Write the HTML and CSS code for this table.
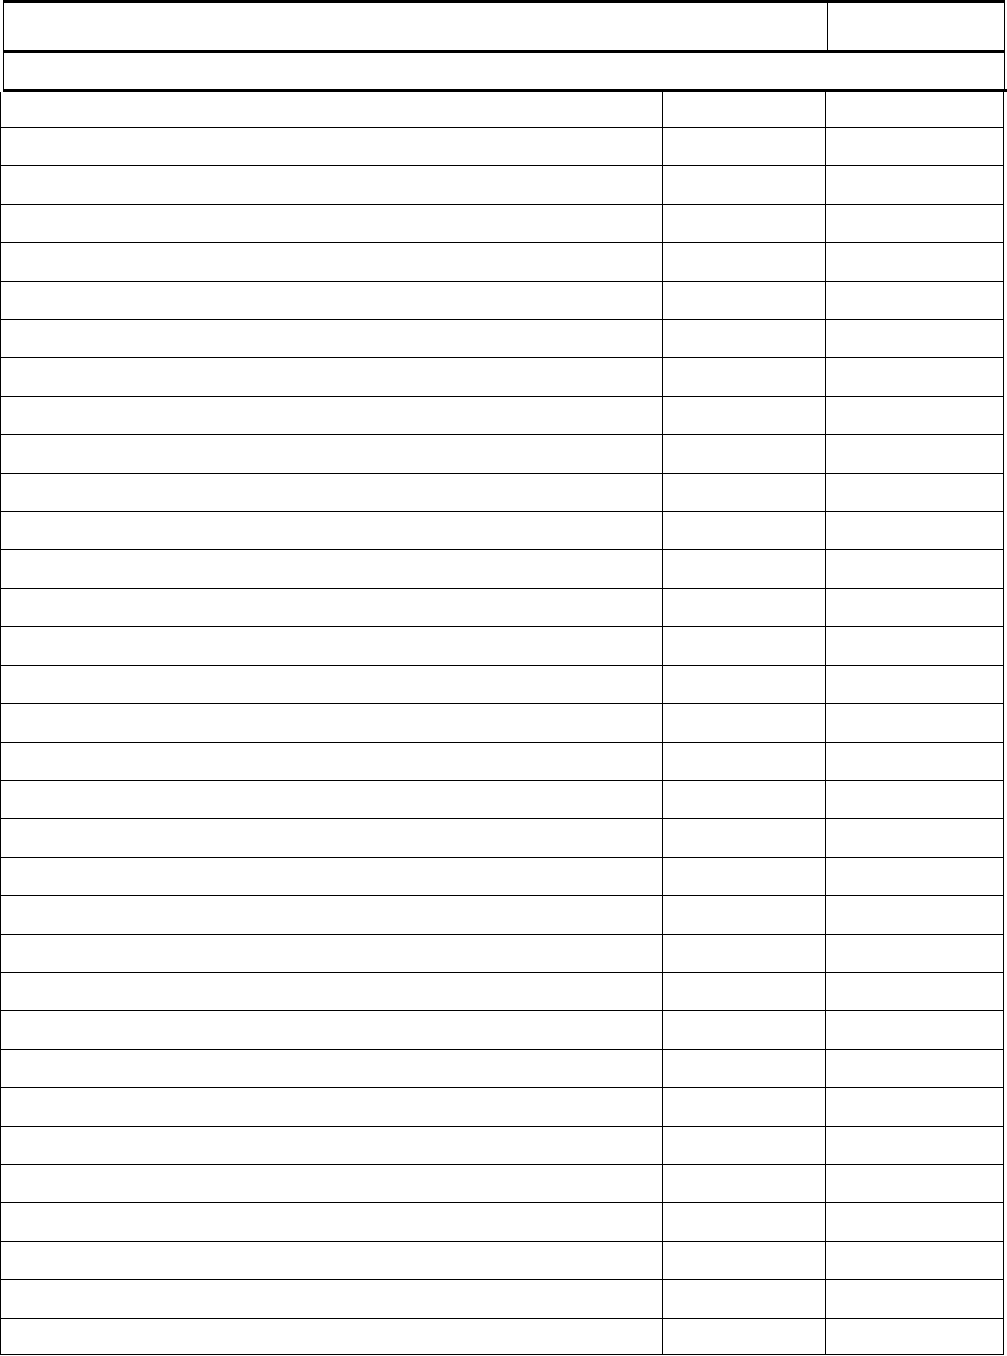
FILE: index.html
```html
<!DOCTYPE html>
<html>
<head>
<meta charset="utf-8">
<title>Table</title>
<link rel="stylesheet" href="styles.css">
</head>
<body>
<div class="sheet">
  <div class="head">
    <div class="head-row">
      <div class="head-cell head-main"></div>
      <div class="head-cell head-side"></div>
    </div>
    <div class="head-sub"></div>
  </div>
  <div class="rule"></div>
  <div class="grid" id="grid">
    <div class="row first"><div class="c c1"></div><div class="c c2"></div><div class="c c3"></div></div>
    <div class="row"><div class="c c1"></div><div class="c c2"></div><div class="c c3"></div></div>
    <div class="row"><div class="c c1"></div><div class="c c2"></div><div class="c c3"></div></div>
    <div class="row"><div class="c c1"></div><div class="c c2"></div><div class="c c3"></div></div>
    <div class="row"><div class="c c1"></div><div class="c c2"></div><div class="c c3"></div></div>
    <div class="row"><div class="c c1"></div><div class="c c2"></div><div class="c c3"></div></div>
    <div class="row"><div class="c c1"></div><div class="c c2"></div><div class="c c3"></div></div>
    <div class="row"><div class="c c1"></div><div class="c c2"></div><div class="c c3"></div></div>
    <div class="row"><div class="c c1"></div><div class="c c2"></div><div class="c c3"></div></div>
    <div class="row"><div class="c c1"></div><div class="c c2"></div><div class="c c3"></div></div>
    <div class="row"><div class="c c1"></div><div class="c c2"></div><div class="c c3"></div></div>
    <div class="row"><div class="c c1"></div><div class="c c2"></div><div class="c c3"></div></div>
    <div class="row"><div class="c c1"></div><div class="c c2"></div><div class="c c3"></div></div>
    <div class="row"><div class="c c1"></div><div class="c c2"></div><div class="c c3"></div></div>
    <div class="row"><div class="c c1"></div><div class="c c2"></div><div class="c c3"></div></div>
    <div class="row"><div class="c c1"></div><div class="c c2"></div><div class="c c3"></div></div>
    <div class="row"><div class="c c1"></div><div class="c c2"></div><div class="c c3"></div></div>
    <div class="row"><div class="c c1"></div><div class="c c2"></div><div class="c c3"></div></div>
    <div class="row"><div class="c c1"></div><div class="c c2"></div><div class="c c3"></div></div>
    <div class="row"><div class="c c1"></div><div class="c c2"></div><div class="c c3"></div></div>
    <div class="row"><div class="c c1"></div><div class="c c2"></div><div class="c c3"></div></div>
    <div class="row"><div class="c c1"></div><div class="c c2"></div><div class="c c3"></div></div>
    <div class="row"><div class="c c1"></div><div class="c c2"></div><div class="c c3"></div></div>
    <div class="row"><div class="c c1"></div><div class="c c2"></div><div class="c c3"></div></div>
    <div class="row"><div class="c c1"></div><div class="c c2"></div><div class="c c3"></div></div>
    <div class="row"><div class="c c1"></div><div class="c c2"></div><div class="c c3"></div></div>
    <div class="row"><div class="c c1"></div><div class="c c2"></div><div class="c c3"></div></div>
    <div class="row"><div class="c c1"></div><div class="c c2"></div><div class="c c3"></div></div>
    <div class="row"><div class="c c1"></div><div class="c c2"></div><div class="c c3"></div></div>
    <div class="row"><div class="c c1"></div><div class="c c2"></div><div class="c c3"></div></div>
    <div class="row"><div class="c c1"></div><div class="c c2"></div><div class="c c3"></div></div>
    <div class="row"><div class="c c1"></div><div class="c c2"></div><div class="c c3"></div></div>
    <div class="row last"><div class="c c1"></div><div class="c c2"></div><div class="c c3"></div></div>
  </div>
</div>
</body>
</html>
```

FILE: styles.css
```css
html, body {
  margin: 0;
  padding: 0;
  background: #ffffff;
  font-family: "Liberation Sans", Arial, sans-serif;
  overflow: hidden;
}

.sheet {
  width: 1007px;
  height: 1356px;
  display: flex;
  flex-direction: column;
}

.head {
  margin-left: 3px;
  width: 1002px;
  box-sizing: border-box;
  border-top: 3px solid #000;
  border-left: 1px solid #000;
  border-right: 1px solid #000;
  display: flex;
  flex-direction: column;
}

.head-row {
  display: flex;
  height: 47px;
  border-bottom: 3px solid #000;
}

.head-cell {
  height: 100%;
}

.head-main {
  width: 823px;
  border-right: 1px solid #000;
}

.head-side {
  flex: 1;
}

.head-sub {
  height: 36px;
}

.rule {
  margin-left: 3px;
  width: 1004px;
  height: 3px;
  background: #000;
}

.grid {
  width: 1004px;
  box-sizing: border-box;
  border-left: 1px solid #000;
  border-right: 1px solid #000;
  display: flex;
  flex-direction: column;
}

.row {
  display: flex;
  height: 38.42px;
  box-sizing: border-box;
  border-bottom: 1px solid #000;
  flex: none;
}

.row.first {
  height: 36px;
}

.row.last {
  height: 36px;
}

.c {
  height: 100%;
  box-sizing: border-box;
}

.c1 {
  width: 662px;
  border-right: 1px solid #000;
}

.c2 {
  width: 163px;
  border-right: 1px solid #000;
}

.c3 {
  flex: 1;
}
```
